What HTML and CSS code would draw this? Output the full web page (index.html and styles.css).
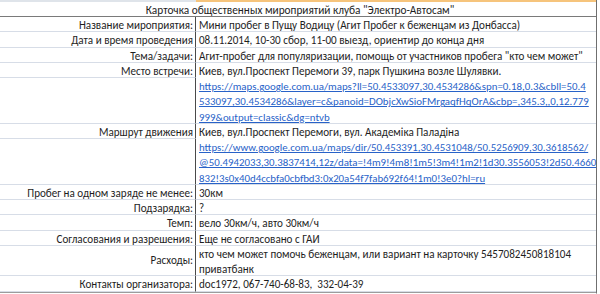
FILE: index.html
```html
<!DOCTYPE html>
<html lang="ru">
<head>
  <meta charset="UTF-8" />
  <title>Карточка мероприятия</title>
  <link rel="stylesheet" href="styles.css">
</head>
<body>

  <div class="sheet">
    <div class="col-head">
      <div class="col-head-a"></div>
      <div class="col-head-b"></div>
    </div>

    <div class="sheet-title">Карточка общественных мироприятий клуба "Электро-Автосам"</div>

    <div class="sheet-grid">
      <div class="label">Название мироприятия:</div>
      <div class="value">Мини пробег в Пущу Водицу (Агит Пробег к беженцам из Донбасса)</div>

      <div class="label">Дата и время проведения</div>
      <div class="value">08.11.2014, 10-30 сбор, 11-00 выезд, ориентир до конца дня</div>

      <div class="label">Тема/задачи:</div>
      <div class="value">Агит-пробег для популяризации, помощь от участников пробега "кто чем может"</div>

      <div class="label">Место встречи:</div>
      <div class="value span-4">
        Киев, вул.Проспект Перемоги 39, парк Пушкина возле Шулявки.<br>
        <a href="#">https://maps.google.com.ua/maps?ll=50.4533097,30.4534286&amp;spn=0.18,0.3&amp;cbll=50.4<br>533097,30.4534286&amp;layer=c&amp;panoid=DObjcXwSioFMrgaqfHqOrA&amp;cbp=,345.3,,0,12.779<br>999&amp;output=classic&amp;dg=ntvb</a>
      </div>
      <div class="label span-3"></div>

      <div class="label">Маршрут движения</div>
      <div class="value span-4">
        Киев, вул.Проспект Перемоги, вул. Академіка Паладіна<br>
        <a href="#">https://www.google.com.ua/maps/dir/50.453391,30.4531048/50.5256909,30.3618562/<br>@50.4942033,30.3837414,12z/data=!4m9!4m8!1m5!3m4!1m2!1d30.3556053!2d50.4660<br>832!3s0x40d4ccbfa0cbfbd3:0x20a54f7fab692f64!1m0!3e0?hl=ru</a>
      </div>
      <div class="label span-3"></div>

      <div class="label">Пробег на одном заряде не менее:</div>
      <div class="value">30км</div>

      <div class="label">Подзарядка:</div>
      <div class="value">?</div>

      <div class="label">Темп:</div>
      <div class="value">вело 30км/ч, авто 30км/ч</div>

      <div class="label">Согласования и разрешения:</div>
      <div class="value">Еще не согласовано с ГАИ</div>

      <div class="label span-2 middle">Расходы:</div>
      <div class="value span-2">кто чем может помочь беженцам, или вариант на карточку 5457082450818104<br>приватбанк</div>

      <div class="label">Контакты организатора:</div>
      <div class="value">doc1972, 067-740-68-83,&nbsp; 332-04-39</div>
    </div>
  </div>

</body>
</html>
```

FILE: styles.css
```css
body {
  margin: 0;
  font-family: Carlito, Calibri, Lato, sans-serif;
  font-size: 11.1px;
  color: #1e1e1e;
  background: #fff;
}

.sheet {
  width: 597px;
  box-sizing: border-box;
  border-right: 1px solid #6f6f6f;
  border-bottom: 3px double #9c9c9c;
}

.col-head {
  display: flex;
  height: 2px;
}

.col-head-a {
  width: 196px;
  background: #dfe4ea;
}

.col-head-b {
  flex: 1;
  background: #f6c47c;
}

.sheet-title {
  height: 14px;
  line-height: 16px;
  font-size: 11.3px;
  text-align: center;
  border-bottom: 1px solid #7a7a7a;
  box-sizing: content-box;
  padding-left: 4px;
}

.sheet-grid {
  display: grid;
  grid-template-columns: 196px 1fr;
  grid-auto-rows: 15.25px;
}

.label,
.value {
  box-sizing: border-box;
  border-bottom: 1px solid #d7dde7;
  padding-top: 1px;
  line-height: 15.25px;
  white-space: nowrap;
}

.label {
  grid-column: 1;
  text-align: right;
  padding-right: 2px;
  border-right: 1px solid #4a4a4a;
}

.value {
  grid-column: 2;
  padding-left: 3px;
}

.value a {
  font-size: 10.85px;
  color: #2862c8;
  text-decoration: underline;
}

.span-2 {
  grid-row: span 2;
}

.span-3 {
  grid-row: span 3;
}

.span-4 {
  grid-row: span 4;
}

.middle {
  display: flex;
  align-items: center;
  justify-content: flex-end;
}
```
